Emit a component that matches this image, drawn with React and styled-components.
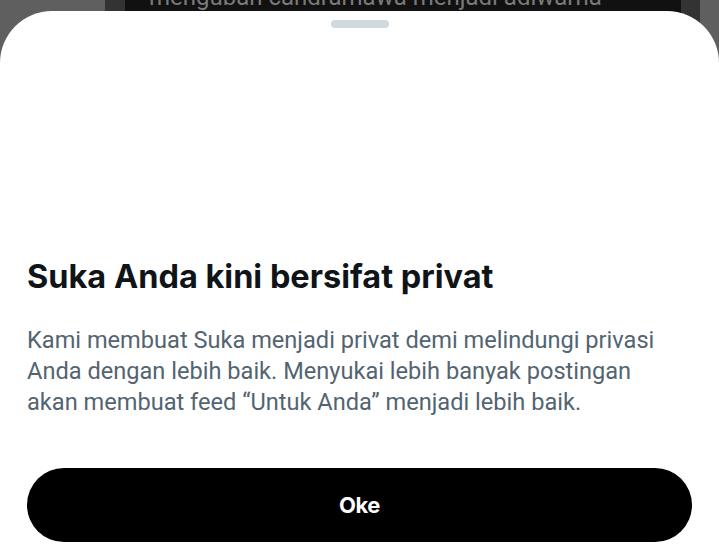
import React from "react";
import styled, { createGlobalStyle } from "styled-components";

const Global = createGlobalStyle`
  html, body { margin: 0; padding: 0; }
  body { width: 719px; height: 556px; overflow: hidden; background: #5f5f5f; }
  * { box-sizing: border-box; }
`;

const Stage = styled.div`
  position: relative;
  width: 719px;
  height: 556px;
  overflow: hidden;
`;

const Backdrop = styled.div`
  display: grid;
  grid-template-columns: 105px 20px 1fr 19px 19px;
  height: 100%;
`;

const BackPanel = styled.div`
  background: ${(p) => p.$tone};
`;

const BackCard = styled.div`
  background: #111111;
  padding: 0 0 0 24px;
  overflow: hidden;
`;

const BackText = styled.div`
  font-family: Roboto, "Noto Sans", sans-serif;
  font-size: 24px;
  line-height: 28px;
  color: #7a7a7a;
  margin-top: -17px;
  white-space: nowrap;
`;

const Sheet = styled.div`
  position: absolute;
  left: 0;
  right: 0;
  top: 11px;
  bottom: 0;
  background: #ffffff;
  border-radius: 52px 52px 0 0;
  display: flex;
  flex-direction: column;
  padding: 9px 27px 14px;
`;

const Handle = styled.div`
  align-self: center;
  width: 58px;
  height: 8px;
  border-radius: 4px;
  background: #cfd9de;
`;

const Content = styled.div`
  flex: 1;
  display: flex;
  flex-direction: column;
  justify-content: flex-end;
`;

const Title = styled.h1`
  margin: 0;
  font-family: Inter, "Noto Sans", sans-serif;
  font-weight: 700;
  font-size: 32.5px;
  line-height: 37px;
  color: #0f1419;
`;

const Body = styled.p`
  margin: 30px 0 0;
  max-width: 640px;
  font-family: Roboto, "Noto Sans", sans-serif;
  font-size: 23.6px;
  line-height: 31px;
  color: #536471;
`;

const OkButton = styled.button`
  margin-top: 50px;
  height: 74px;
  width: 100%;
  border: none;
  border-radius: 37px;
  background: #000000;
  color: #ffffff;
  font-family: Inter, "Noto Sans", sans-serif;
  font-weight: 700;
  font-size: 22px;
  letter-spacing: -0.5px;
  cursor: pointer;
`;

export default function App() {
  return (
    <Stage>
      <Global />
      <Backdrop>
        <BackPanel $tone="#5f5f5f" />
        <BackPanel $tone="#333333" />
        <BackCard>
          <BackText>mengubah candramawa menjadi adiwarna</BackText>
        </BackCard>
        <BackPanel $tone="#333333" />
        <BackPanel $tone="#5f5f5f" />
      </Backdrop>
      <Sheet>
        <Handle />
        <Content>
          <Title>Suka Anda kini bersifat privat</Title>
          <Body>
            Kami membuat Suka menjadi privat demi melindungi privasi Anda dengan
            lebih baik. Menyukai lebih banyak postingan akan membuat feed
            “Untuk Anda” menjadi lebih baik.
          </Body>
          <OkButton>Oke</OkButton>
        </Content>
      </Sheet>
    </Stage>
  );
}
